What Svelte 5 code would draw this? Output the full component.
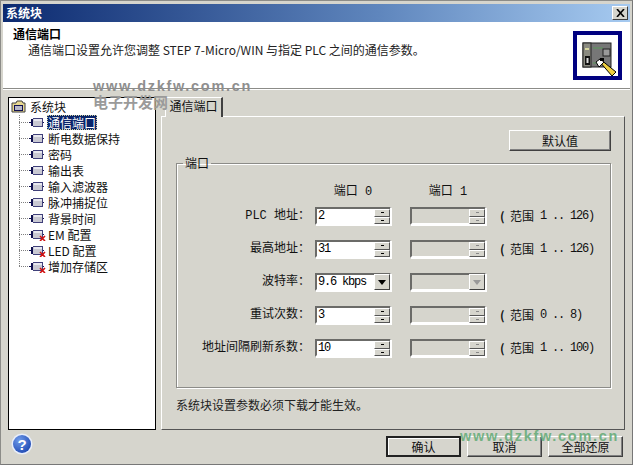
<script>
  const treeItems = [
    { label: "通信端口", selected: true },
    { label: "断电数据保持" },
    { label: "密码" },
    { label: "输出表" },
    { label: "输入滤波器" },
    { label: "脉冲捕捉位" },
    { label: "背景时间" },
    { label: "EM 配置", bad: true },
    { label: "LED 配置", bad: true },
    { label: "增加存储区", bad: true },
  ];

  const rows = [
    { label: "PLC 地址：", value: "2", range: "1 .. 126)" },
    { label: "最高地址：", value: "31", range: "1 .. 126)" },
    { label: "波特率：", value: "9.6 kbps", combo: true },
    { label: "重试次数：", value: "3", range: "0 .. 8)" },
    { label: "地址间隔刷新系数：", value: "10", range: "1 .. 100)" },
  ];
</script>

{#snippet moduleIcon(bad)}
  <svg class="mod" width="17" height="13" viewBox="0 0 17 13">
    <path d="M0 6.500h2M13 6.500h2" stroke="#101050" />
    <rect x="2" y="3" width="2" height="7" fill="#101050" />
    <rect x="4" y="2" width="10" height="9" fill="#c8c8d2" />
    <path d="M4 2.500h10M4 10.500h10M13.500 2v9" stroke="#40407a" />
    <rect x="5" y="3" width="8" height="2" fill="#e8e8f0" />
    {#if bad}
      <path d="M11 8l5 5M16 8l-5 5" stroke="#d01010" stroke-width="1.600" />
    {/if}
  </svg>
{/snippet}

{#snippet spinner(disabled)}
  <span class="spin" class:off={disabled}>
    <span class="spin-btn"><i></i></span>
    <span class="spin-btn"><i></i></span>
  </span>
{/snippet}

<div class="window">
  <div class="titlebar">
    <span class="title">系统块</span>
    <span class="close">
      <svg width="9" height="8" viewBox="0 0 9 8"><path d="M1 0l7 8M8 0l-7 8" stroke="#000" stroke-width="1.600" /></svg>
    </span>
  </div>

  <div class="header">
    <div class="header-text">
      <div class="h-title">通信端口</div>
      <div class="h-desc">通信端口设置允许您调整 STEP 7-Micro/WIN 与指定 PLC 之间的通信参数。</div>
    </div>
    <svg class="h-icon" width="49" height="49" viewBox="0 0 49 49">
      <rect width="49" height="49" fill="#000080" />
      <rect x="4" y="4" width="41" height="41" fill="#fff" />
      <rect x="10" y="12" width="28" height="24" fill="#777" stroke="#222" />
      <rect x="10" y="12" width="8" height="24" fill="#8a8a80" stroke="#222" />
      <rect x="12" y="17" width="4" height="2" fill="#d8d8a0" />
      <rect x="12" y="25" width="5" height="9" fill="#111" />
      <rect x="13.500" y="27" width="2" height="5" fill="#ddd" />
      <path d="M20 17h10M20 32h12" stroke="#5a9a5a" />
      <rect x="30" y="18" width="7" height="7" fill="#999" stroke="#222" />
      <path d="M27 28l16 13-4 4-13-15z" fill="#f0d040" stroke="#000" />
      <path d="M27 28l4 3-5 5-3-5z" fill="#fff" stroke="#000" />
      <rect x="27" y="27" width="4" height="3" fill="#000" />
    </svg>
  </div>

  <div class="main">
    <div class="tree">
      <div class="tree-root">
        <svg width="15" height="13" viewBox="0 0 15 13">
          <path d="M1 3h4l1-2h5l1 2h2v9H1z" fill="#e8d890" stroke="#404040" />
          <rect x="3.500" y="5.500" width="8" height="5" fill="#b8b8c8" stroke="#101050" />
        </svg>
        <span>系统块</span>
      </div>
      <div class="tree-items">
        {#each treeItems as item}
          <div class="tree-row">
            <span class="dots"></span>
            {@render moduleIcon(item.bad)}
            <span class="tree-label" class:selected={item.selected}>{item.label}</span>
          </div>
        {/each}
      </div>
    </div>

    <div class="tabs">
      <div class="tab-strip"><span class="tab">通信端口</span></div>
      <div class="panel">
        <div class="panel-top"><button class="btn default-btn">默认值</button></div>
        <fieldset class="group">
          <legend>端口</legend>
          <div class="form-head">
            <span class="col-head">端口 0</span>
            <span class="col-head">端口 1</span>
          </div>
          <div class="form">
            {#each rows as row}
              <span class="row-label">{row.label}</span>
              <span class="field">
                <span class="value">{row.value}</span>
                {#if row.combo}
                  <span class="combo-btn"><i></i></span>
                {:else}
                  {@render spinner(false)}
                {/if}
              </span>
              <span class="field disabled">
                <span class="value"></span>
                {#if row.combo}
                  <span class="combo-btn"><i></i></span>
                {:else}
                  {@render spinner(true)}
                {/if}
              </span>
              <span class="range">
                {#if row.range}<b>(</b><span class="range-word">范围</span><em>{row.range}</em>{/if}
              </span>
            {/each}
          </div>
        </fieldset>
        <div class="note">系统块设置参数必须下载才能生效。</div>
      </div>
    </div>
  </div>

  <div class="footer">
    <svg class="help" width="22" height="22" viewBox="0 0 22 22">
      <defs>
        <radialGradient id="helpFill" cx="0.35" cy="0.3" r="0.8">
          <stop offset="0" stop-color="#6f9bea" />
          <stop offset="1" stop-color="#1c46b0" />
        </radialGradient>
      </defs>
      <circle cx="11" cy="11" r="10.500" fill="#e8eefa" />
      <circle cx="11" cy="11" r="9" fill="url(#helpFill)" />
      <text x="11" y="16.500" text-anchor="middle" class="help-mark">?</text>
    </svg>
    <div class="buttons">
      <button class="btn primary">确认</button>
      <button class="btn">取消</button>
      <button class="btn">全部还原</button>
    </div>
  </div>

  <div class="wm wm-url">www.dzkfw.com.cn</div>
  <div class="wm wm-cn">电子开发网</div>
  <div class="wm wm-green">www.dzkfw.com.cn</div>
</div>

<style>
  :global(body) {
    margin: 0;
    background: #d6d5cd;
  }

  .window {
    position: relative;
    width: 633px;
    height: 465px;
    box-sizing: border-box;
    overflow: hidden;
    display: flex;
    flex-direction: column;
    background: #d6d5cd;
    border: 1px solid #8c8c88;
    border-right-color: #777;
    border-bottom-color: #777;
    padding: 3px 2px 0 2px;
    font-family: "Noto Sans CJK SC", "Liberation Sans", sans-serif;
    font-size: 12px;
    line-height: 16px;
    color: #111;
  }

  .titlebar {
    height: 18px;
    flex: none;
    display: flex;
    align-items: center;
    justify-content: space-between;
    padding: 0 2px 0 3px;
    background: linear-gradient(90deg, #0c2a70, #5f86bd 60%, #a6caf0);
  }

  .title {
    color: #fff;
    font-weight: 700;
  }

  .close {
    width: 16px;
    height: 14px;
    display: flex;
    align-items: center;
    justify-content: center;
    background: #d6d5cd;
    border: 1px solid;
    border-color: #fff #404040 #404040 #fff;
    box-sizing: border-box;
  }

  .header {
    height: 67px;
    flex: none;
    box-sizing: border-box;
    background: #fff;
    border-bottom: 1px solid #8c8c88;
    box-shadow: 0 1px 0 #fff;
    display: flex;
    justify-content: space-between;
    padding: 4px 8px 0 10px;
  }

  .h-title {
    font-weight: 700;
    color: #000;
  }

  .h-desc {
    padding-left: 15px;
    color: #222;
  }

  .h-icon {
    flex: none;
    margin-top: 5px;
  }

  .main {
    flex: none;
    height: 341px;
    display: flex;
    padding: 8px 0 0 5px;
    box-sizing: border-box;
  }

  .tree {
    width: 148px;
    height: 333px;
    box-sizing: border-box;
    background: #fff;
    border: 1px solid #000;
  }

  .tree-root {
    height: 15px;
    display: flex;
    align-items: center;
    gap: 4px;
    padding: 1px 0 0 2px;
  }

  .tree-items {
    padding-left: 10px;
  }

  .tree-row {
    height: 16px;
    display: flex;
    align-items: center;
    white-space: nowrap;
  }

  .dots {
    width: 10px;
    height: 16px;
    flex: none;
    background:
      repeating-linear-gradient(90deg, #808080 0 1px, transparent 1px 2px) 0 8px / 10px 1px no-repeat,
      repeating-linear-gradient(0deg, #808080 0 1px, transparent 1px 2px) 0 0 / 1px 16px no-repeat;
  }

  .tree-row:last-child .dots {
    background:
      repeating-linear-gradient(90deg, #808080 0 1px, transparent 1px 2px) 0 8px / 10px 1px no-repeat,
      repeating-linear-gradient(0deg, #808080 0 1px, transparent 1px 2px) 0 0 / 1px 8px no-repeat;
  }

  .mod {
    flex: none;
    margin-right: 1px;
  }

  .tree-label {
    padding: 0 1px;
    height: 15px;
    line-height: 15px;
  }

  .tree-label.selected {
    background: #0a246a;
    color: #fff;
    outline: 1px dotted #d0d0a0;
    outline-offset: -1px;
  }

  .tabs {
    margin-left: 5px;
    width: 464px;
    display: flex;
    flex-direction: column;
    margin-top: -1px;
  }

  .tab-strip {
    height: 20px;
    flex: none;
    display: flex;
    align-items: flex-end;
    padding-left: 4px;
  }

  .tab {
    width: 58px;
    height: 20px;
    box-sizing: border-box;
    text-align: center;
    border: 1px solid #fff;
    border-right: 2px solid #404040;
    border-bottom: none;
    line-height: 15px;
    position: relative;
    top: 1px;
    background: #d6d5cd;
  }

  .panel {
    height: 314px;
    box-sizing: border-box;
    border: 1px solid;
    border-color: #fff #555 #555 #fff;
    padding: 13px 13px 0 14px;
  }

  .panel-top {
    display: flex;
    justify-content: flex-end;
    height: 27px;
  }

  .btn {
    font: inherit;
    color: #111;
    width: 75px;
    height: 21px;
    padding: 0;
    line-height: 16px;
    background: #d6d5cd;
    border: 1px solid;
    border-color: #fff #404040 #404040 #fff;
    box-shadow: inset -1px -1px 0 #808080;
  }

  .default-btn {
    width: 102px;
  }

  .group {
    margin: 0;
    padding: 17px 0 0 0;
    height: 231px;
    box-sizing: border-box;
    border: 1px solid #8c8c88;
    box-shadow: 1px 1px 0 #fff, inset 1px 1px 0 #fff;
  }

  legend {
    margin-left: 6px;
    padding: 0 2px;
    line-height: 12px;
  }

  .form-head {
    display: grid;
    grid-template-columns: 76px 76px;
    column-gap: 19px;
    margin-left: 138px;
    height: 12px;
    margin-bottom: 9px;
  }

  .col-head {
    text-align: center;
    font-family: "Liberation Mono", "Noto Sans CJK SC", monospace;
    line-height: 12px;
  }

  .form {
    display: grid;
    grid-template-columns: 138px 76px 76px 1fr;
    grid-auto-rows: 18px;
    row-gap: 15px;
    align-items: center;
  }

  .row-label {
    text-align: right;
    white-space: nowrap;
    padding-right: 5px;
    font-family: "Liberation Mono", "Noto Sans CJK SC", monospace;
  }

  .field {
    width: 76px;
    height: 18px;
    box-sizing: border-box;
    display: flex;
    align-items: stretch;
    background: #fff;
    border: 2px solid;
    border-color: #6b6b68 #fff #fff #6b6b68;
    box-shadow: 1px 1px 0 #fff;
  }

  .field.disabled {
    background: #d6d5cd;
    margin-left: 19px;
  }

  .value {
    flex: 1;
    min-width: 0;
    padding-left: 1px;
    white-space: nowrap;
    font-family: "Liberation Mono", monospace;
    font-size: 12px;
    letter-spacing: -1.200px;
    line-height: 15px;
    color: #000;
  }

  .spin {
    width: 16px;
    display: flex;
    flex-direction: column;
    margin: -1px -1px -1px 0;
    border-top: 1px solid #6b6b68;
  }

  .spin-btn {
    flex: 1;
    background: #d6d5cd;
    border: 1px solid;
    border-color: #fff #555 #555 #fff;
    display: flex;
    align-items: center;
    justify-content: center;
  }

  .spin-btn i {
    width: 3px;
    height: 1px;
    background: #000;
  }

  .spin.off .spin-btn i {
    background: #888;
  }

  .combo-btn {
    width: 16px;
    margin: -1px -1px -1px 0;
    background: #d6d5cd;
    border: 1px solid;
    border-color: #fff #404040 #404040 #fff;
    display: flex;
    align-items: center;
    justify-content: center;
    box-sizing: border-box;
  }

  .combo-btn i {
    width: 0;
    height: 0;
    border: 4px solid transparent;
    border-top: 5px solid #000;
    border-bottom: none;
  }

  .disabled .combo-btn i {
    border-top-color: #999;
  }

  .range {
    white-space: nowrap;
    margin-left: 33px;
    display: flex;
    align-items: center;
  }

  .range b {
    font-weight: 700;
    width: 10px;
  }

  .range em {
    font-style: normal;
    margin-left: 6px;
    font-family: "Liberation Mono", monospace;
    font-size: 12px;
    letter-spacing: -1.200px;
  }

  .note {
    margin-top: 9px;
    color: #222;
  }

  .footer {
    flex: 1;
    display: flex;
    justify-content: space-between;
    padding: 3px 7px 0 8px;
  }

  .help-mark {
    fill: #fff;
    font: 700 15px "Liberation Sans", sans-serif;
  }

  .buttons {
    display: flex;
    gap: 6px;
    margin-top: 3px;
  }

  .primary {
    border: 2px solid #222;
    box-shadow: inset 1px 1px 0 #fff;
  }

  .wm {
    position: absolute;
    font-weight: 700;
    white-space: nowrap;
    pointer-events: none;
  }

  .wm-url {
    left: 92px;
    top: 77px;
    font: 700 14.500px "Liberation Sans", sans-serif;
    letter-spacing: 1.700px;
    color: #8f8f8f;
  }

  .wm-cn {
    left: 92px;
    top: 93px;
    font-size: 15px;
    color: #9a9a9a;
  }

  .wm-green {
    left: 459px;
    top: 427px;
    font: 700 14.500px "Liberation Sans", sans-serif;
    letter-spacing: 1.700px;
    color: #74b184;
  }
</style>
